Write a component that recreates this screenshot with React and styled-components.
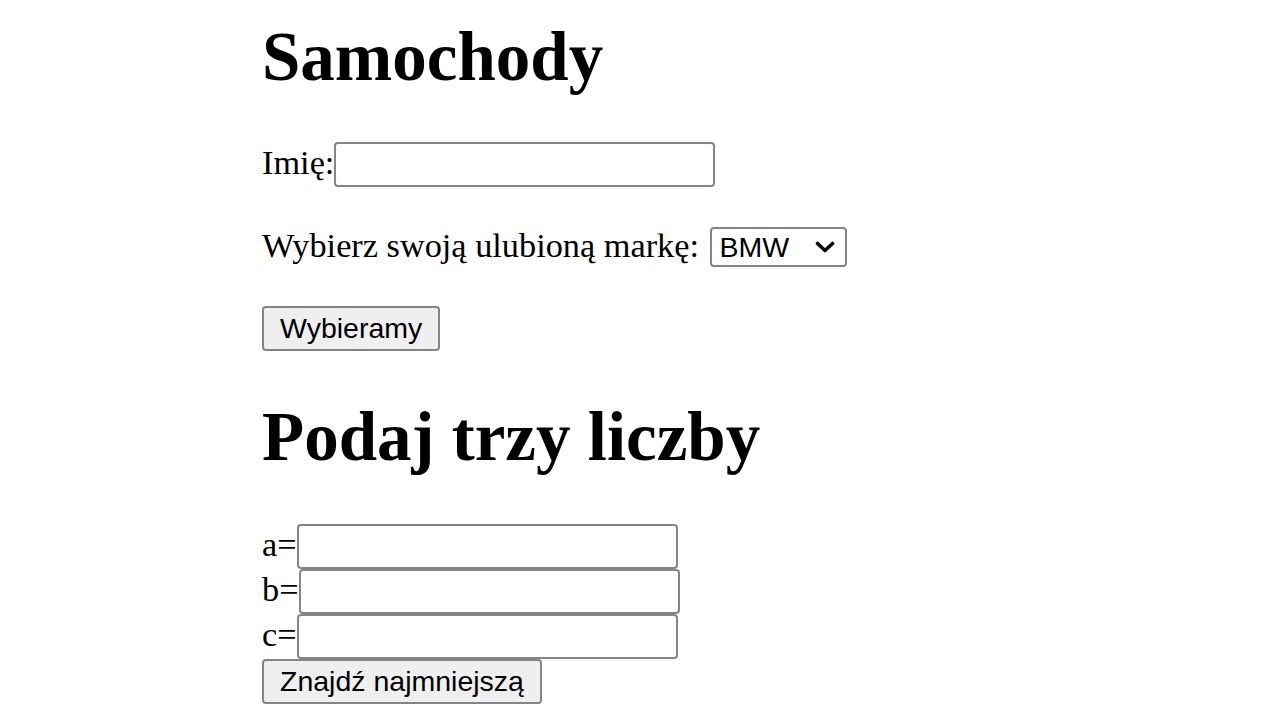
import React from 'react';
import styled, { createGlobalStyle } from 'styled-components';

const GlobalStyle = createGlobalStyle`
  html, body {
    margin: 0;
    background: #ffffff;
  }
  body {
    font-family: "Liberation Serif", "Times New Roman", serif;
    font-size: 34.3px;
    color: #000000;
  }
`;

const Page = styled.div`
  padding: 18px 0 0 262px;
`;

const Heading = styled.h1`
  font-size: 69px;
  font-weight: 700;
  margin: ${({ $first }) => ($first ? '0 0 45px' : '47px 0')};
  line-height: normal;
`;

const Line = styled.p`
  margin: 38px 0 39px;
  line-height: normal;
`;

const Row = styled.div`
  line-height: normal;
`;

const TextInput = styled.input`
  box-sizing: border-box;
  width: 381px;
  height: 45px;
  padding: 2px 4px;
  border: 2px solid #858585;
  border-radius: 4px;
  font-family: "Liberation Sans", Arial, sans-serif;
  font-size: 28.5px;
  background: #ffffff;
  vertical-align: baseline;
`;

const SelectWrap = styled.span`
  position: relative;
  display: inline-block;
  margin-left: 2px;
`;

const Select = styled.select`
  appearance: none;
  box-sizing: border-box;
  width: 137px;
  height: 40px;
  padding: 0 0 0 8px;
  border: 2px solid #858585;
  border-radius: 4px;
  background: #ffffff;
  font-family: "Liberation Sans", Arial, sans-serif;
  font-size: 28.5px;
  color: #000000;
`;

const Chevron = styled.svg`
  position: absolute;
  right: 12px;
  top: 50%;
  transform: translateY(-50%);
  width: 20px;
  height: 12px;
  pointer-events: none;
`;

const Button = styled.button`
  box-sizing: border-box;
  height: 45px;
  padding: 0 16px;
  border: 2px solid #858585;
  border-radius: 4px;
  background: #efefef;
  font-family: "Liberation Sans", Arial, sans-serif;
  font-size: 28.5px;
  color: #000000;
`;

export default function App() {
  return (
    <>
      <GlobalStyle />
      <Page>
        <Heading $first>Samochody</Heading>
        <form onSubmit={(e) => e.preventDefault()}>
          <Line>
            Imię:<TextInput type="text" />
          </Line>
          <Line>
            Wybierz swoją ulubioną markę:{' '}
            <SelectWrap>
              <Select defaultValue="BMW">
                <option>BMW</option>
                <option>Audi</option>
                <option>Mercedes</option>
                <option>Toyota</option>
              </Select>
              <Chevron viewBox="0 0 20 12">
                <path d="M2.5 2.5 L10 9.5 L17.5 2.5" fill="none" stroke="#000" strokeWidth="3.6" strokeLinecap="round" strokeLinejoin="round" />
              </Chevron>
            </SelectWrap>
          </Line>
          <Button type="submit">Wybieramy</Button>
        </form>

        <Heading>Podaj trzy liczby</Heading>
        <form onSubmit={(e) => e.preventDefault()}>
          <Row>a=<TextInput type="text" /></Row>
          <Row>b=<TextInput type="text" /></Row>
          <Row>c=<TextInput type="text" /></Row>
          <Button type="submit">Znajdź najmniejszą</Button>
        </form>
      </Page>
    </>
  );
}
